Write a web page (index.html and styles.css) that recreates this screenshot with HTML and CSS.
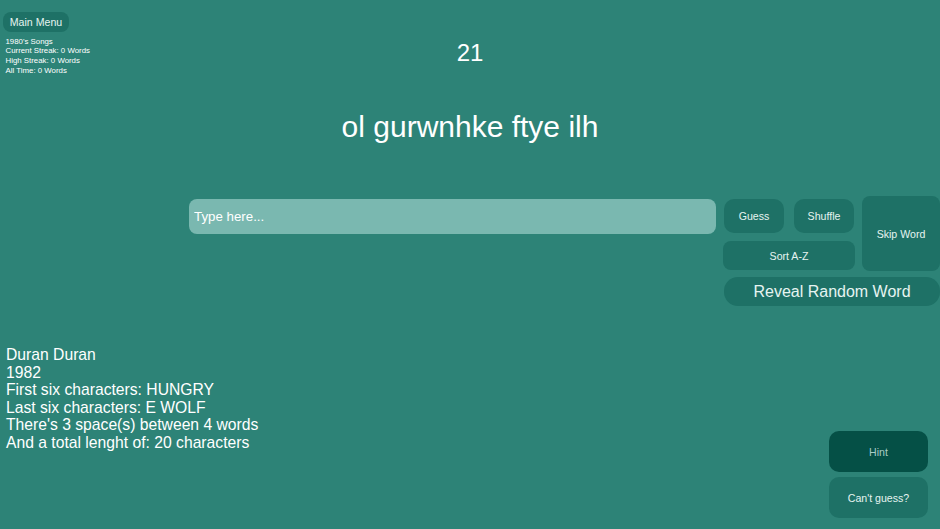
FILE: index.html
```html
<!DOCTYPE html>
<html lang="en">
<head>
<meta charset="utf-8">
<title>Word Game</title>
<link rel="stylesheet" href="styles.css">
</head>
<body>
<main class="page">
  <header class="top">
    <div class="status">
      <button class="btn menu">Main Menu</button>
      <div class="stats">
        <div>1980's Songs</div>
        <div>Current Streak: 0 Words</div>
        <div>High Streak: 0 Words</div>
        <div>All Time: 0 Words</div>
      </div>
    </div>
    <div class="count">21</div>
  </header>
  <h1 class="scramble">ol gurwnhke ftye ilh</h1>
  <section class="play">
    <input class="entry" type="text" placeholder="Type here...">
    <div class="controls">
      <button class="btn guess">Guess</button>
      <button class="btn shuffle">Shuffle</button>
      <button class="btn skip">Skip Word</button>
      <button class="btn sort">Sort A-Z</button>
      <button class="btn reveal">Reveal Random Word</button>
    </div>
  </section>
  <section class="bottom">
    <div class="clues">
      <div>Duran Duran</div>
      <div>1982</div>
      <div>First six characters: HUNGRY</div>
      <div>Last six characters: E WOLF</div>
      <div>There's 3 space(s) between 4 words</div>
      <div>And a total lenght of: 20 characters</div>
    </div>
    <div class="help">
      <button class="btn hint">Hint</button>
      <button class="btn giveup">Can't guess?</button>
    </div>
  </section>
</main>
</body>
</html>
```
FILE: styles.css
```css
* { box-sizing: border-box; }
html, body { margin: 0; height: 100%; }
body {
  background: #2d8377;
  color: #fff;
  font-family: "Liberation Sans", Arial, sans-serif;
  overflow: hidden;
}
.page {
  width: 940px;
  height: 529px;
  display: flex;
  flex-direction: column;
}
.btn {
  border: 0;
  margin: 0;
  padding: 0;
  background: #1e7166;
  color: #e6f4f1;
  font-family: inherit;
  font-size: 10.6px;
  border-radius: 10px;
}
.top {
  flex: none;
  height: 115px;
  display: grid;
  grid-template-columns: 1fr auto 1fr;
}
.status { padding: 12px 0 0 3px; }
.menu {
  display: block;
  width: 66px;
  height: 20px;
  border-radius: 8px;
}
.stats {
  margin: 4.5px 0 0 2.5px;
  font-size: 7.85px;
  line-height: 9.67px;
}
.count {
  grid-column: 2;
  padding-top: 39px;
  font-size: 24px;
  line-height: 28px;
}
.scramble {
  flex: none;
  margin: 0;
  height: 84px;
  text-align: center;
  font-weight: 400;
  font-size: 30px;
  line-height: 24px;
}
.play {
  flex: none;
  height: 147px;
  display: flex;
  align-items: flex-start;
  padding-left: 189px;
}
.entry {
  flex: none;
  width: 527px;
  height: 35px;
  border: 0;
  border-radius: 8px;
  background: #7ab8b0;
  color: #fff;
  padding: 0 5px;
  font-family: inherit;
  font-size: 13.3px;
  outline: 0;
}
.entry::placeholder { color: #fff; opacity: 1; }
.controls {
  flex: none;
  width: 217px;
  margin: -3px 0 0 7px;
  display: grid;
  grid-template-columns: 61px 10px 61px 7px 78px;
  grid-template-rows: 3px 34px 8px 30px 6px 29px;
}
.guess { grid-column: 1; grid-row: 2; margin-left: 1px; }
.shuffle { grid-column: 3; grid-row: 2; margin-right: 1px; }
.skip { grid-column: 5; grid-row: 1 / span 4; border-radius: 8px; }
.sort { grid-column: 1 / span 3; grid-row: 4; margin-bottom: 1px; border-radius: 8px; }
.reveal {
  grid-column: 1 / span 5;
  grid-row: 6;
  margin-left: 1px;
  font-size: 16px;
  border-radius: 14px;
}
.bottom {
  flex: 1;
  display: flex;
  justify-content: space-between;
  align-items: flex-start;
}
.clues {
  padding-left: 6px;
  font-size: 15.7px;
  line-height: 17.6px;
}
.help {
  width: 99px;
  margin: 85px 12px 0 0;
  display: flex;
  flex-direction: column;
  gap: 5px;
}
.hint {
  height: 41px;
  background: #055046;
  color: #a9cbc5;
}
.giveup { height: 41px; }
```
